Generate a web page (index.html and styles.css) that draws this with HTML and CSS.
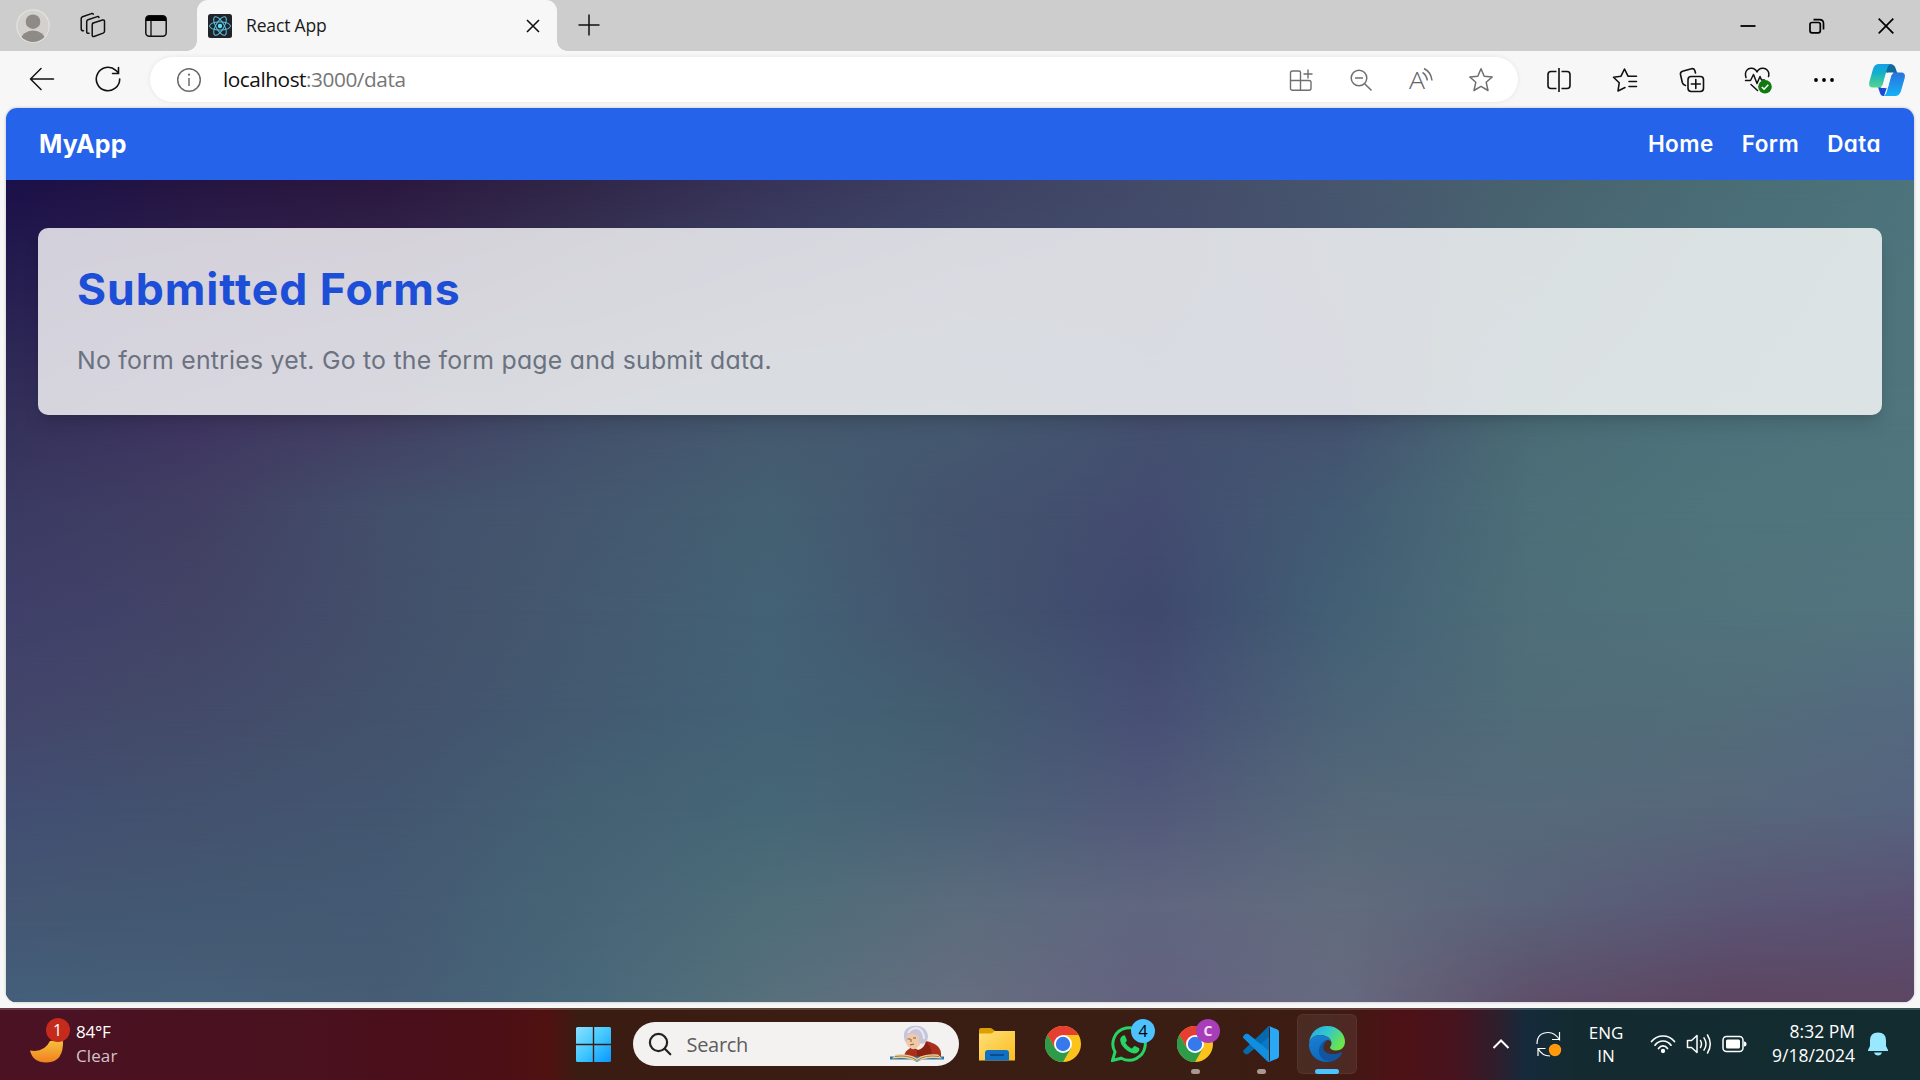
FILE: index.html
```html
<!DOCTYPE html>
<html lang="en">
<head>
<meta charset="utf-8">
<title>React App</title>
<link rel="stylesheet" href="styles.css">
</head>
<body>
<div class="screen">
  <header class="tabstrip">
    <div class="strip-icon avatar-cell">
      <svg width="34" height="34" viewBox="0 0 34 34"><defs><clipPath id="av"><circle cx="17" cy="17" r="16"/></clipPath></defs><circle cx="17" cy="17" r="16.2" fill="#d3d1cd" stroke="#e3e2df" stroke-width="1.2"/><g clip-path="url(#av)" fill="#8e8a86"><circle cx="17" cy="12.7" r="7.3"/><ellipse cx="17" cy="31" rx="12" ry="9.5"/></g></svg>
    </div>
    <div class="strip-icon spaces-cell">
      <svg width="26" height="26" viewBox="0 0 26 26" fill="none" stroke="#111" stroke-width="1.5" stroke-linejoin="round" stroke-linecap="round"><path d="M12.5 11.2 22.500 8q2-.5 2 1.400v9.800q0 1.300-1.400 1.900L14 24.500q-1.800.5-1.800-1.300V12.800q0-1.200 1.300-1.600z"/><path d="M9 21.300q-2.300.3-2.300-1.500V9.500q0-1.300 1.300-1.800L17.300 4.600q1.300-.3 1.700.8"/><path d="M3.500 18.800q-2.300 0-2.300-1.800V6.500q0-1.200 1.300-1.700L11.500 1.600q1.300-.3 1.800.6"/></svg>
    </div>
    <div class="strip-icon panel-cell">
      <svg width="22" height="22" viewBox="0 0 22 22"><rect x=".8" y=".8" width="20.400" height="20.400" rx="3.500" fill="none" stroke="#111" stroke-width="1.500"/><path d="M1 6V4q0-3 3-3h14q3 0 3 3v2z"/><path d="M6 6v15" stroke="#111" stroke-width="1.300"/></svg>
    </div>
    <div class="tab">
      <svg class="react" width="24" height="24" viewBox="0 0 24 24"><rect width="24" height="24" rx="2.500" fill="#20232a"/><g fill="none" stroke="#61dafb" stroke-width="1" opacity=".9"><ellipse cx="12" cy="12" rx="10.500" ry="4.100"/><ellipse cx="12" cy="12" rx="10.500" ry="4.100" transform="rotate(60 12 12)"/><ellipse cx="12" cy="12" rx="10.500" ry="4.100" transform="rotate(120 12 12)"/></g><circle cx="12" cy="12" r="2.200" fill="#61dafb"/></svg>
      <span class="tab-title">React App</span>
      <svg class="tab-close" width="14" height="14" viewBox="0 0 14 14"><path d="M1 1l12 12M13 1 1 13" stroke="#111" stroke-width="1.600"/></svg>
    </div>
    <svg class="new-tab" width="22" height="22" viewBox="0 0 22 22"><path d="M11 .5v21M.5 11h21" stroke="#111" stroke-width="1.500"/></svg>
    <div class="window-buttons">
      <div class="win"><svg width="16" height="16" viewBox="0 0 16 16"><path d="M.5 8h15" stroke="#000" stroke-width="1.800"/></svg></div>
      <div class="win"><svg width="16" height="16" viewBox="0 0 16 16" fill="none" stroke="#000" stroke-width="1.700"><rect x="1" y="4.500" width="10.300" height="10.300" rx="2"/><path d="M4.500 1.600h6q4 0 4 4v6"/></svg></div>
      <div class="win"><svg width="16" height="16" viewBox="0 0 16 16"><path d="M.7.7l14.600 14.600M15.300.7.7 15.300" stroke="#000" stroke-width="1.700"/></svg></div>
    </div>
  </header>

  <div class="toolbar">
    <svg class="back" width="26" height="24" viewBox="0 0 26 24" fill="none" stroke="#111" stroke-width="1.500" stroke-linecap="round" stroke-linejoin="round"><path d="M24.500 12H1.500M12 1.500 1.500 12 12 22.500"/></svg>
    <svg class="reload" width="26" height="26" viewBox="0 0 26 26" fill="none" stroke="#111" stroke-width="1.600" stroke-linecap="round"><path d="M24.700 13A11.700 11.700 0 1 1 20.800 4.300L23.500 7M23.500 1.500V7.500H17.500"/></svg>
    <div class="address">
      <svg class="info" width="26" height="26" viewBox="0 0 26 26"><circle cx="13" cy="13" r="11.300" fill="none" stroke="#6b6b6b" stroke-width="1.500"/><path d="M13 11v8" stroke="#6b6b6b" stroke-width="1.500"/><circle cx="13" cy="7.700" r="1.100" fill="#6b6b6b"/></svg>
      <div class="url">localhost<span>:3000/data</span></div>
      <div class="address-icons">
        <div class="cell"><svg width="24" height="24" viewBox="0 0 24 24" fill="none" stroke="#6f6f6f" stroke-width="1.400"><path d="M12 22.300H3.500q-2 0-2-2V5q0-2 2-2H10q1.500 0 1.500 1.500v17.800M1.500 12.500H20q2 0 2 2v5.800q0 2-2 2h-8.500M19 1.500v9M14.500 6h9"/></svg></div>
        <div class="cell"><svg width="24" height="24" viewBox="0 0 24 24" fill="none" stroke="#6f6f6f" stroke-width="1.500"><circle cx="10" cy="10" r="7.800"/><path d="M6 10h8M15.700 15.700l6.800 6.800"/></svg></div>
        <div class="cell"><svg class="read-aloud" width="26" height="26" viewBox="0 0 26 26"><text x="1" y="22" class="read-letter" textLength="16" lengthAdjust="spacingAndGlyphs">A</text><path d="M14.500 5.500q4 2.500 4.800 8M16 1.500q7 3.500 8 12" fill="none" stroke="#6f6f6f" stroke-width="1.500"/></svg></div>
        <div class="cell"><svg width="26" height="26" viewBox="0 0 26 26"><path d="M13 1.800 16.200 9.200 24.200 10 18.200 15.300 20 23.500 13 19.400 6 23.500 7.800 15.300 1.800 10 9.800 9.200z" fill="none" stroke="#6f6f6f" stroke-width="1.500" stroke-linejoin="round"/></svg></div>
      </div>
    </div>
    <div class="actions">
      <div class="cell"><svg width="26" height="26" viewBox="0 0 26 26" fill="none" stroke="#111" stroke-width="1.600"><path d="M10.500 4.500H5q-3 0-3 3v11q0 3 3 3h5.500M15.500 4.500H21q3 0 3 3v11q0 3-3 3h-5.500M13 1v24"/></svg></div>
      <div class="cell"><svg width="26" height="26" viewBox="0 0 26 26" fill="none" stroke="#111" stroke-width="1.600" stroke-linejoin="round" stroke-linecap="round"><path d="M13 20.500 6 24 7.200 15.800 1.500 10.200 9 9.200 12.500 2 16 9.200H24.500M17 14.500h7.500M17 19.500h7.500"/></svg></div>
      <div class="cell"><svg width="26" height="26" viewBox="0 0 26 26" fill="none" stroke="#111" stroke-width="1.600" stroke-linecap="round"><rect x="9" y="9.500" width="15.500" height="15" rx="3.200"/><path d="M16.800 12.500v9M12.300 17h9M6.500 18.500Q4 18 3.300 15.500L1.500 7.500Q1 5 3.500 4.200L12.500 1.700q2.500-.5 3.300 1.800l.7 2.500"/></svg></div>
      <div class="cell"><svg width="28" height="28" viewBox="0 0 28 28"><g fill="none" stroke="#111" stroke-width="1.500" stroke-linecap="round" stroke-linejoin="round"><path d="M2 11.500C0 5 4 2 7.500 2.300c3 .2 5 2.500 5.500 3.700.5-1.200 2.500-3.500 5.500-3.700C22 2 26 5 24.500 10.500M1.500 14.500h5l3-6 3.500 9 3-7 1.500 3.500h3M7 18.500l6.500 6"/></g><circle cx="21" cy="20.800" r="6.800" fill="#10790f"/><path d="M17.800 21l2.300 2.200 4.200-4.400" fill="none" stroke="#fff" stroke-width="1.600"/></svg></div>
      <div class="cell"><svg width="22" height="6" viewBox="0 0 22 6"><circle cx="3" cy="3" r="1.900"/><circle cx="11" cy="3" r="1.900"/><circle cx="19" cy="3" r="1.900"/></svg></div>
      <div class="cell copilot"><svg width="38" height="34" viewBox="0 0 38 34"><defs><linearGradient id="cp1" x1="0" y1="0" x2="0" y2="1"><stop offset="0" stop-color="#149fe8"/><stop offset=".4" stop-color="#12b2c8"/><stop offset="1" stop-color="#58d58b"/></linearGradient><linearGradient id="cp2" x1="0" y1="0" x2="0" y2="1"><stop offset="0" stop-color="#2b72dc"/><stop offset="1" stop-color="#14b0f8"/></linearGradient></defs><path d="M11 1h11q4 0 5.500 4l1.800 5H19z" fill="#106b9c"/><path d="M10 24h9l-3 9q-3 .5-4-3z" fill="#1c48d8"/><path d="M11 1h11.500q-2.500 1-3.500 5l-4 15q-1 3.500-5 3.500H5q-5 0-3.700-5.500L5 6q1.500-5 6-5z" fill="url(#cp1)"/><path d="M27 33H15.500q2.500-1 3.500-5l4-14.500Q24 9.500 28 9.500h5q5 0 3.700 5.500L33 28q-1.500 5-6 5z" fill="url(#cp2)"/><path d="M20 9.500h6q-2.500.5-3.300 4L20 24q-1 1.500-3.500 1h-6q3.500 0 4.500-3.500l2.500-9.500Q18.300 9.500 20 9.500z" fill="#f7f7f7"/></svg></div>
    </div>
  </div>

  <div class="viewport">
    <div class="page">
      <nav class="navbar">
        <div class="brand">MyApp</div>
        <div class="links"><a class="home">Home</a><a class="form">Form</a><a class="data">Data</a></div>
      </nav>
      <main class="content">
        <div class="wash wash-1"></div><div class="wash wash-2"></div><div class="wash wash-3"></div><div class="wash wash-4"></div>
        <div class="wash wash-5"></div><div class="wash wash-6"></div><div class="wash wash-7"></div><div class="wash wash-8"></div>
        <section class="card">
          <h1>Submitted Forms</h1>
          <p>No form entries yet. Go to the form page and submit data.</p>
        </section>
      </main>
    </div>
  </div>

  <footer class="taskbar">
    <div class="weather">
      <div class="moon">
        <svg width="44" height="42" viewBox="0 0 44 42"><defs><linearGradient id="mn" x1="0" y1="0" x2="0" y2="1"><stop offset="0" stop-color="#f6c33c"/><stop offset="1" stop-color="#f08020"/></linearGradient></defs><path d="M1 28.500q14 2.500 20-9.500l13-1q1 22-16 22.500Q4 41 1 28.500z" fill="url(#mn)"/></svg>
        <span class="badge alert">1</span>
      </div>
      <div class="weather-text"><div class="temp">84°F</div><div class="sky">Clear</div></div>
    </div>
    <svg class="start" width="35" height="35" viewBox="0 0 35 35"><defs><linearGradient id="wn" x1="0" y1="0" x2="1" y2="1"><stop offset="0" stop-color="#8be0ff"/><stop offset=".5" stop-color="#42c8ff"/><stop offset="1" stop-color="#0796ff"/></linearGradient></defs><path d="M1.500 0H16.800V16.800H0V1.500Q0 0 1.500 0zM18.200 0H33.500Q35 0 35 1.500V16.800H18.200zM0 18.200H16.800V35H1.500Q0 35 0 33.500zM18.200 18.200H35V33.500Q35 35 33.500 35H18.200z" fill="url(#wn)"/></svg>
    <div class="search">
      <svg width="24" height="24" viewBox="0 0 24 24" fill="none" stroke="#222" stroke-width="2.200" stroke-linecap="round"><circle cx="10.500" cy="10.500" r="8.600"/><path d="M16.800 16.800l5.500 5.500"/></svg>
      <span>Search</span>
      <svg class="reader" width="54" height="38" viewBox="0 0 54 38"><path d="M14 31q1-6 10-10l12-5q14 3 15 12v6H14z" fill="#a8301c"/><path d="M27 25l10-8q6 8 4 16H27z" fill="#8c2112"/><path d="M31 14l5 1q-1 8-8 10l-3-2z" fill="#f5efe8"/><path d="M15 10q7-6 15 0l1 8q-4 7-9 6-7-2-7-14z" fill="#f0c9a5"/><path d="M14 12Q13 2 24 .7q12-.7 14 9.500 0 8-6 8.800-4-1-3-7Q24 6 17 10q0 6-1 8-2-3-2-6z" fill="#c6c5dc"/><path d="M18 8q3-5 9-5 7 2 7 11" fill="none" stroke="#e9e8f1" stroke-width="2"/><path d="M17.500 14h3M23 13h3M20 20l4-1M21 14v3" stroke="#835b42" stroke-width="1"/><path d="M0 34.500h22l5 2.500 5-2.500h22v-3H0z" fill="#3173aa"/><path d="M2 33.500l4-4q13-1 21 4 8-5 21-4l4 4q-16-2-25 3-9-5-25-3z" fill="#ead09a"/><path d="M5 31.500q14-2 22 4 8-6 22-4" fill="none" stroke="#a57d48"/></svg>
    </div>
    <div class="apps">
      <div class="app"><svg width="36" height="36" viewBox="0 0 36 36"><defs><linearGradient id="fo" x1="0" y1="0" x2="1" y2="1"><stop offset="0" stop-color="#ffdf78"/><stop offset="1" stop-color="#fbbd20"/></linearGradient></defs><path d="M0 4q0-2 2-2h9q1.500 0 2.500 1L16 5v4H0z" fill="#dda000"/><path d="M0 7.500h11q2 0 3.500-1.500l1-1H36v29.500H0z" fill="url(#fo)"/><path d="M6 34.500V27q0-3 3-3h18q3 0 3 3v7.500z" fill="#1071c4"/><path d="M11 29h14" stroke="#124481" stroke-width="1.700"/></svg></div>
      <div class="app"><svg width="36" height="36" viewBox="0 0 36 36"><g id="chrome"><circle cx="18" cy="18" r="18" fill="#fcc41a"/><path d="M18 9h15.600A18 18 0 0 0 2.400 9l7.800 13.500z" fill="#e63e30"/><path d="M2.400 9A18 18 0 0 0 18 36l7.800-13.500L10.200 22.500z" fill="#2d9b4a"/><circle cx="18" cy="18" r="9" fill="#fff"/><circle cx="18" cy="18" r="7.200" fill="#3579ec"/></g></svg></div>
      <div class="app"><svg width="36" height="36" viewBox="0 0 36 36"><path d="M1.500 34.500 4 26A16.200 16.200 0 1 1 10.300 32.200z" fill="none" stroke="#25d366" stroke-width="3"/><path d="M12 9.500q1.500-.8 2.300.8l1.500 3.600q.3 1-1.500 2.800 2 4 6.500 6l2-2.200q.7-.7 1.600-.2l3.500 1.700q1 .6.300 2.500-1.500 3-5 3-4.500-.3-9.500-5-5-5-4.500-9.500.5-2.500 2.800-3.500z" fill="#25d366"/></svg><span class="badge chat">4</span></div>
      <div class="app"><svg width="36" height="36" viewBox="0 0 36 36"><use href="#chrome"/></svg><span class="badge profile">C</span><i class="dot"></i></div>
      <div class="app"><svg width="36" height="36" viewBox="0 0 36 36"><path d="M26 0 13 14l-8-6q-1.500-.8-3 .5L.7 9.700q-1 1.100 0 2.500L26 36V25z" fill="#0879c9"/><path d="M26 0v11L5 28q-1.500 1-3-.3L.7 26.500q-1-1.200 0-2.500z" fill="#0769ad"/><path d="M.7 9.700 2 8.500q1.500-1.300 3-.5l21 17V36q-1 0-2-1L.7 12.200q-1-1.400 0-2.500z" fill="#118ede"/><path d="M26 0l8.500 3.500Q36 4.200 36 6v24q0 1.700-1.500 2.500L26 36q1-1 1-3V3q0-2-1-3z" fill="#2aa8f5"/></svg><i class="dot"></i></div>
      <div class="app active"><svg width="36" height="36" viewBox="0 0 36 36"><defs><linearGradient id="e1" x1="0" y1="0" x2="1" y2=".5"><stop offset="0" stop-color="#26a5df"/><stop offset=".5" stop-color="#31c6d0"/><stop offset="1" stop-color="#6be54b"/></linearGradient><linearGradient id="e2" x1="0" y1="0" x2=".3" y2="1"><stop offset="0" stop-color="#1b80d2"/><stop offset="1" stop-color="#0c69bf"/></linearGradient></defs><path d="M0 17C1 7 8 0 18 0c11 0 18 8 18 15.500 0 6-4 9-9 9-4 0-6-1.500-6-3 0-1 1.500-1.500 1.500-4C22.500 13 18 9 11 9 5 9 1 13 0 17z" fill="url(#e1)"/><path d="M0 18C1 12 5 9 11 9c7 0 11.500 4 11.500 8 0-2-2-3-4-3-7 0-9 19 7 20Q22 36 18 36C7 36-.5 27.500 0 18z" fill="url(#e2)"/><path d="M18.500 14c-4 0-8.500 5-8.500 11 0 5 4 10 11 10.700Q29 34.500 33 27.500q.5-1.500-1-1-12 4-17-2-2.500-5 3.500-10.500z" fill="#1154a0"/></svg><i class="dot wide"></i></div>
    </div>
    <div class="tray">
      <svg class="chevron" width="18" height="12" viewBox="0 0 18 12"><path d="M1.500 10 9 2.500 16.500 10" fill="none" stroke="#fff" stroke-width="2"/></svg>
      <svg class="update" width="26" height="26" viewBox="0 0 26 26"><path d="M1 13Q1 1.500 12.500 1.500q6 0 11 7V1M24 8.500h-8M9.500 17.500H2V25M2 17.500q4 7.500 12 7.500" fill="none" stroke="#fff" stroke-width="1.200"/><circle cx="19" cy="19" r="6.200" fill="#ff9a0c"/></svg>
      <div class="lang"><div>ENG</div><div>IN</div></div>
      <svg class="wifi" width="26" height="20" viewBox="0 0 26 20" fill="none" stroke="#fff" stroke-width="1.700" stroke-linecap="round"><path d="M1.500 7.500Q6 2 13 2t11.500 5.500M5 11.200Q8 7 13 7t8 4.200M8.500 14.500q1.800-2.700 4.500-2.700t4.500 2.700"/><circle cx="13" cy="17" r="1.300" fill="#fff"/></svg>
      <svg class="sound" width="26" height="22" viewBox="0 0 26 22" fill="none" stroke="#fff" stroke-width="1.500" stroke-linejoin="round" stroke-linecap="round"><path d="M1.500 7.500H5.500L11 2.500v17l-5.500-5H1.500zM14.500 7.500q2 3.500 0 7M18 4.800q4 6.200 0 12.400M21.500 2q5.500 9 0 18"/></svg>
      <svg class="battery" width="25" height="18" viewBox="0 0 25 18"><rect x="1" y="1.500" width="20" height="15" rx="3.500" fill="none" stroke="#fff" stroke-width="1.500"/><rect x="4" y="4.500" width="14" height="9" rx="1.500" fill="#fff"/><path d="M22 6.500q2.500 0 2.500 2.500T22 11.500z" fill="#fff"/></svg>
      <div class="clock"><div class="time">8:32 PM</div><div class="date">9/18/2024</div></div>
      <svg class="bell" width="22" height="24" viewBox="0 0 22 24"><path d="M11 .5q8 0 8 8V14l2 4v1H1v-1l2-4V8.500q0-8 8-8zM7 20.500h8q-1 3-4 3t-4-3z" fill="#98e8ff"/></svg>
    </div>
  </footer>
</div>
</body>
</html>
```
FILE: styles.css
```css
* { box-sizing: border-box; }
body { margin: 0; background: #f7f7f7; font-family: "Open Sans", "Noto Sans", sans-serif; }
svg { display: block; flex: none; }
.screen { width: 1920px; height: 1080px; display: flex; flex-direction: column; overflow: hidden; }

/* Tab strip */
.tabstrip { height: 51px; flex: none; background: #cdcdcd; display: flex; align-items: center; }
.strip-icon { display: flex; justify-content: center; align-items: center; height: 51px; }
.avatar-cell { width: 66px; }
.spaces-cell { width: 54px; padding-bottom: 1px; }
.panel-cell { width: 72px; }
.tab { position: relative; width: 360px; height: 51px; margin-left: 5px; padding: 0 17px 0 11px; background: #f7f7f7; border-radius: 11px 11px 0 0; display: flex; align-items: center; }
.tab::before, .tab::after { content: ""; position: absolute; bottom: 0; width: 10px; height: 10px; }
.tab::before { left: -10px; background: radial-gradient(circle at 0 0, transparent 9.5px, #f7f7f7 10px); }
.tab::after { right: -10px; background: radial-gradient(circle at 100% 0, transparent 9.5px, #f7f7f7 10px); }
.tab-title { margin-left: 14px; padding-bottom: 1px; font-size: 17.5px; letter-spacing: -.15px; color: #1b1b1b; white-space: nowrap; }
.tab-close { margin-left: auto; }
.new-tab { margin-left: 21px; margin-bottom: 1px; }
.window-buttons { margin-left: auto; display: flex; }
.win { width: 69px; display: flex; justify-content: center; }

/* Toolbar */
.toolbar { height: 57px; flex: none; display: flex; align-items: center; background: #f7f7f7; }
.back { margin-left: 29px; margin-bottom: 1px; }
.reload { margin-left: 40px; margin-bottom: 1px; }
.address { width: 1368px; height: 45px; margin-left: 29px; border-radius: 23px; background: #fff; box-shadow: 0 0 5px rgba(0,0,0,.08); display: flex; align-items: center; padding-left: 26px; padding-right: 7px; }
.url { margin-left: 21px; padding-bottom: 2px; font-size: 20.8px; letter-spacing: -.45px; color: #111; white-space: nowrap; }
.url span { color: #767676; }
.address-icons { margin-left: auto; display: flex; }
.address-icons .cell { width: 60px; }
.cell { display: flex; justify-content: center; align-items: center; }
.read-aloud { overflow: visible; }
.read-letter { font-size: 24px; font-weight: 300; fill: #666; }
.actions { display: flex; margin-left: 8px; }
.actions .cell { width: 66.3px; }
.actions .copilot { width: 59px; }

/* Page */
.viewport { height: 900px; flex: none; padding: 0 6px 6px; }
.page { height: 894px; border-radius: 11px; overflow: hidden; display: flex; flex-direction: column; box-shadow: 0 0 3px rgba(0,0,0,.25); font-family: Inter, "Open Sans", sans-serif; font-feature-settings: "cv11"; }
.navbar { height: 72px; flex: none; padding: 0 33px 1px 33px; background: #2563eb; color: #fff; display: flex; align-items: center; justify-content: space-between; }
.brand { font-size: 25px; font-weight: 700; letter-spacing: .1px; }
.links { display: flex; gap: 28px; font-size: 22.5px; font-weight: 600; letter-spacing: .45px; }
.content { flex: 1; display: grid; grid-template: 100% / 100%; }
.card, .wash { grid-area: 1 / 1; }
.card { position: relative; height: 187px; margin: 48px 32px 0; padding: 33px 39px; border-radius: 10px; background: rgba(255,255,255,.8); box-shadow: 0 12px 19px -4px rgba(0,0,0,.13), 0 5px 8px -5px rgba(0,0,0,.12); }
.card h1 { margin: 0; font-size: 44.5px; line-height: 56px; font-weight: 700; color: #1d4ed8; letter-spacing: .95px; white-space: nowrap; }
.card p { margin: 25px 0 0; font-size: 24.8px; line-height: 36px; letter-spacing: .24px; color: #6b7280; white-space: nowrap; }

/* Backdrop: horizontal colour bands, each fading in over the one above */
.wash-1 { background: linear-gradient(90deg, #1b1049, #251542, #2b173f, #302648, #37335a, #3d4063, #434b69, #47566e, #48636f, #4a6d76, #4d747c); }
.wash-2 { background: linear-gradient(90deg, #33305a, #3f3560, #423f63, #43506b, #45596f, #445a70, #44506f, #44526f, #4a6c75, #4d727b, #50757c); mask-image: linear-gradient(transparent 0, #000 28.7%); }
.wash-3 { background: linear-gradient(90deg, #3b3a62, #413f63, #43506b, #44576f, #446072, #44536e, #434c70, #425b73, #4c6f78, #50747b, #51757d); mask-image: linear-gradient(transparent 28.7%, #000 40.1%); }
.wash-4 { background: linear-gradient(90deg, #3f3f6a, #434466, #43506b, #44596f, #436276, #44546e, #3f486e, #426075, #4e6f79, #50737b, #52747f); mask-image: linear-gradient(transparent 40.1%, #000 52.3%); }
.wash-5 { background: linear-gradient(90deg, #43466a, #434b69, #43526c, #435a71, #436276, #435d70, #474f75, #4b6377, #506c79, #526d7a, #54697f); mask-image: linear-gradient(transparent 52.3%, #000 64.5%); }
.wash-6 { background: linear-gradient(90deg, #424e72, #43526e, #435670, #446073, #456776, #4a6176, #52597a, #556879, #556a7a, #57677a, #56647f); mask-image: linear-gradient(transparent 64.5%, #000 76.4%); }
.wash-7 { background: linear-gradient(90deg, #445673, #435871, #445a73, #466476, #4e6d79, #5b6c7d, #60667f, #616c7e, #5a6279, #5a5775, #5b5173); mask-image: linear-gradient(transparent 76.4%, #000 88.3%); }
.wash-8 { background: linear-gradient(90deg, #445f7a, #475f78, #465c74, #48687a, #57707b, #666e80, #646280, #676a80, #5e4f6b, #5c4562, #5c4663); mask-image: linear-gradient(transparent 88.3%, #000 100%); }

/* Taskbar */
.taskbar { height: 72px; flex: none; border-top: 2px solid rgba(255,255,255,.17); background: linear-gradient(90deg, #4a1223 0, #4a1220 230px, #4a0f1b 400px, #4c0f15 500px, #501110 548px, #3a1c12 578px, #3a1d13 1200px, #3e1b13 1330px, #4d1115 1400px, #46131e 1455px, #301d2b 1495px, #152a3c 1525px, #132b30 1575px, #132c30 100%) border-box; display: flex; align-items: center; padding-bottom: 2px; color: #fff; }
.weather { width: 576px; display: flex; align-items: center; }
.moon { position: relative; margin-left: 29px; margin-top: -3px; }
.badge { position: absolute; width: 24px; height: 24px; border-radius: 50%; display: flex; align-items: center; justify-content: center; font-size: 16px; line-height: 24px; }
.alert { left: 16.5px; top: -3.5px; background: #c42b1c; }
.weather-text { margin-left: 3px; font-size: 17px; line-height: 24px; letter-spacing: -.2px; margin-top: -1px; }
.sky { color: #d3c4c8; letter-spacing: .1px; }
.search { width: 326px; height: 44px; margin-left: 22px; border-radius: 22px; background: #f3f2f1; display: flex; align-items: center; padding: 0 15px; color: #5d5d5d; font-size: 20px; letter-spacing: -.3px; }
.search span { margin-left: 14.5px; }
.reader { margin-left: auto; }
.apps { display: flex; margin-left: 5px; }
.app { position: relative; width: 66px; height: 60px; display: flex; align-items: center; justify-content: center; }
.active::before { content: ""; position: absolute; inset: 0 3px; border-radius: 6px; border: 1px solid rgba(255,255,255,.05); background: rgba(255,255,255,.07); }
.active svg { position: relative; }
.chat { left: 35px; top: 5px; background: #4cc2ff; color: #000; }
.profile { left: 34px; top: 5px; background: #a83db8; color: #f4d9f7; font-size: 14px; font-weight: 700; }
.dot { position: absolute; bottom: 0; left: 29px; width: 9px; height: 5px; border-radius: 3px; background: #a99793; }
.wide { left: 21px; width: 24px; background: #4cc2ff; }
.tray { flex: 1; display: flex; align-items: center; }
.chevron { margin-left: 132px; }
.update { margin-left: 26px; }
.lang { width: 50px; margin-left: 19px; text-align: center; font-size: 17px; line-height: 23px; }
.wifi { margin-left: 19px; }
.sound { margin-left: 10px; }
.battery { margin-left: 10px; }
.clock { width: 108px; text-align: right; font-size: 17.5px; line-height: 24px; letter-spacing: 0; margin-top: -2px; }
.bell { margin-left: 12px; }
```
